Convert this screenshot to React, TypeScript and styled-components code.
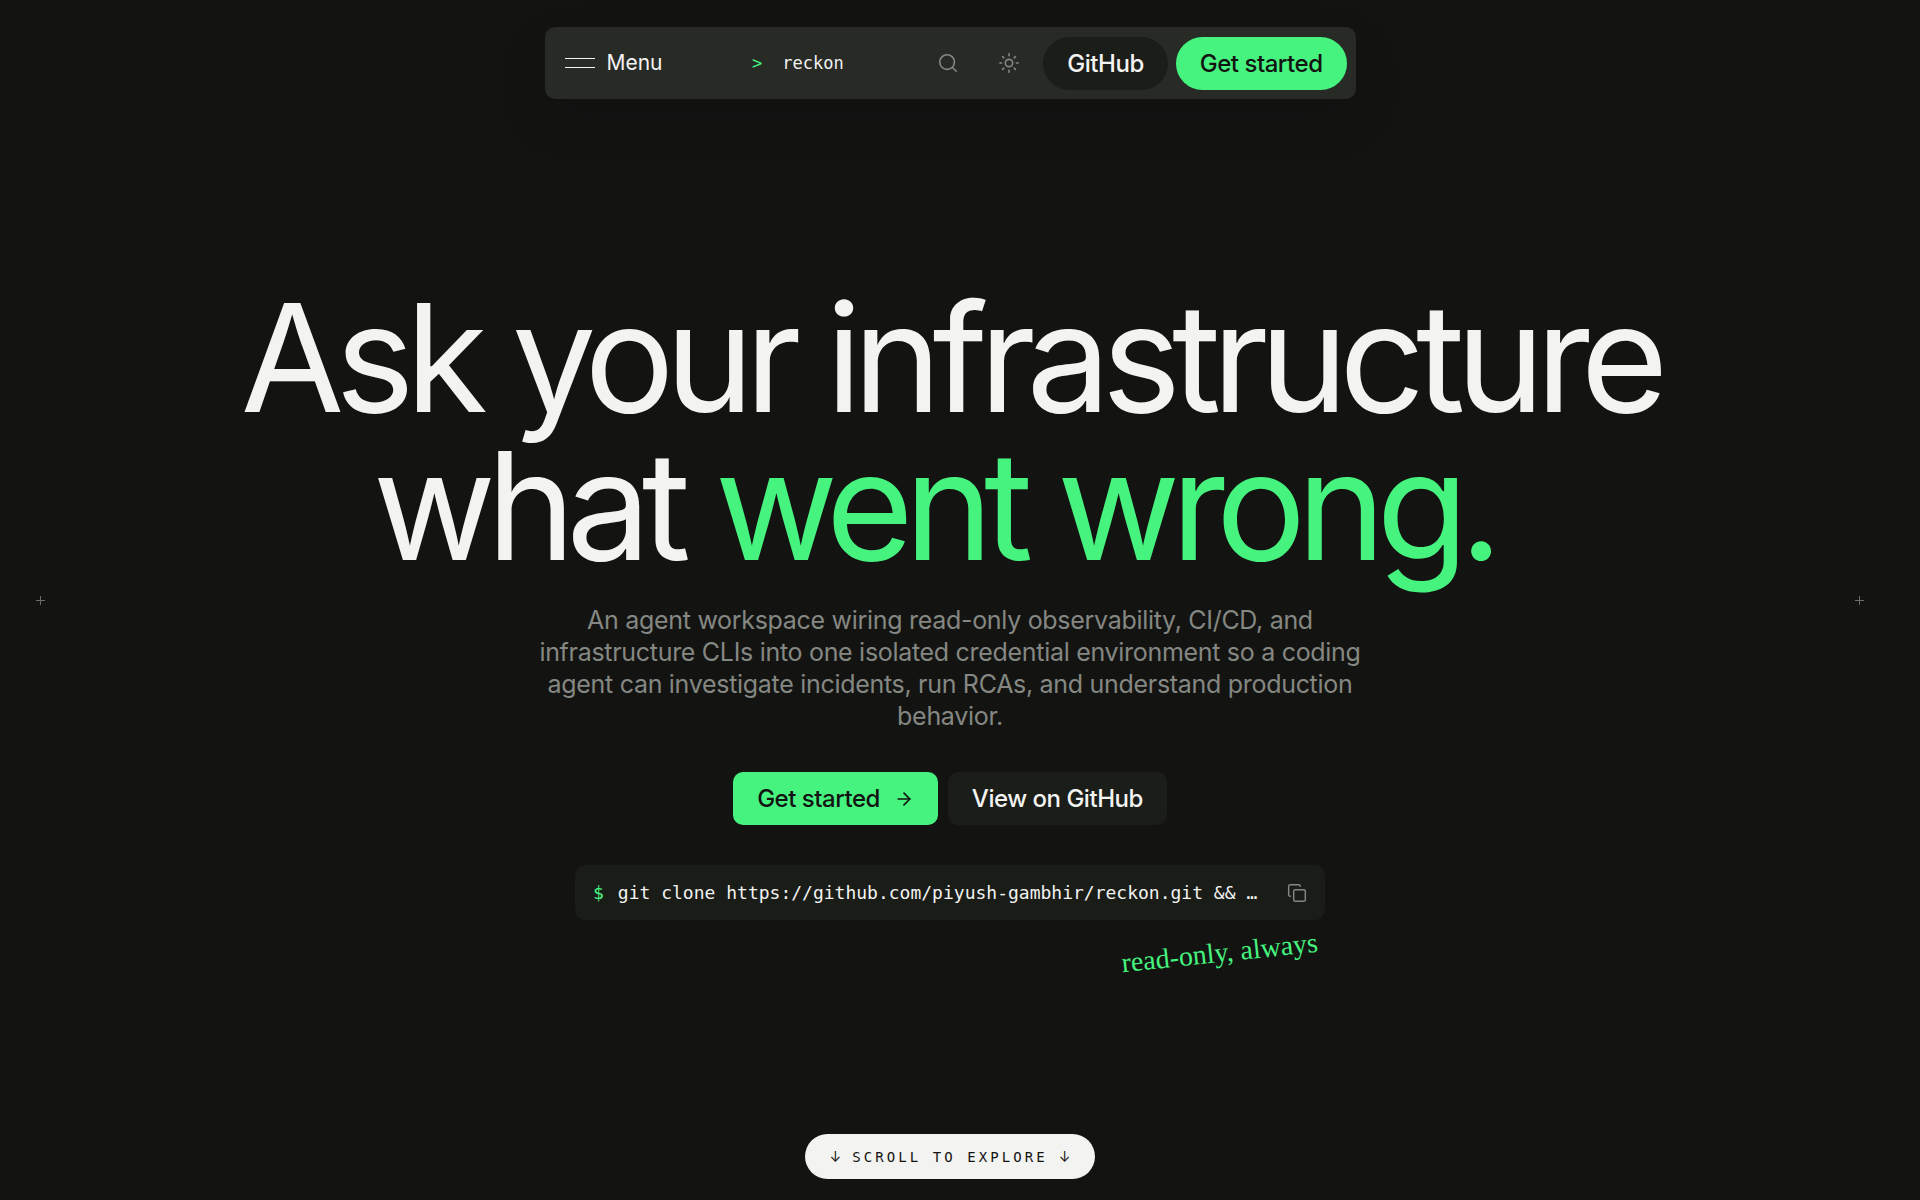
import React from "react";
import styled, { createGlobalStyle } from "styled-components";
import { ArrowRight, Copy, Search, Sun } from "lucide-react";

const GlobalStyle = createGlobalStyle`
  *, *::before, *::after { box-sizing: border-box; }
  body {
    margin: 0;
    background: #131412;
    color: #f3f3f1;
    font-family: Inter, "Liberation Sans", sans-serif;
    -webkit-font-smoothing: antialiased;
  }
  h1, p { margin: 0; }
  button { border: 0; background: none; color: inherit; font: inherit; padding: 0; cursor: pointer; }
  a { color: inherit; text-decoration: none; }
`;

const mono = `"DejaVu Sans Mono", "Liberation Mono", monospace`;
const green = "#46f37f";

const Page = styled.div`
  position: relative;
  min-height: 100vh;
  margin-right: 20px;
  padding: 27px 24px 21px;
  display: flex;
  flex-direction: column;
  align-items: center;
`;

const Nav = styled.nav`
  width: 100%;
  max-width: 811px;
  min-height: 72px;
  padding: 9px;
  padding-left: 20px;
  display: flex;
  justify-content: space-between;
  align-items: center;
  border-radius: 10px;
  background: #272a25;
  box-shadow: 0 20px 50px rgba(0, 0, 0, 0.1);
`;

const MenuButton = styled.button`
  display: flex;
  align-items: center;
  gap: 12px;
  font-size: 21px;
  line-height: 32px;
`;

const Bars = styled.span`
  width: 30px;
  height: 10px;
  border: solid #f3f3f1;
  border-width: 1px 0;
`;

const Brand = styled.a`
  display: flex;
  gap: 20px;
  padding-left: 12px;
  font: 17px/32px ${mono};
`;

const Accent = styled.span`
  color: ${green};
`;

const Actions = styled.div`
  display: flex;
  align-items: center;
  gap: 8px;
`;

const IconButton = styled.button`
  display: grid;
  place-items: center;
  width: 53px;
  height: 53px;
  color: #858782;
`;

const Button = styled.a<{ $primary?: boolean; $pill?: boolean }>`
  display: inline-flex;
  align-items: center;
  gap: 14px;
  height: 53px;
  padding: 0 24px;
  border-radius: ${(p) => (p.$pill ? "27px" : "10px")};
  background: ${(p) => (p.$primary ? green : "#1b1d19")};
  color: ${(p) => (p.$primary ? "#131412" : "#f3f3f1")};
  font-size: 24px;
  font-weight: 500;
  letter-spacing: -0.02em;
  white-space: nowrap;
`;

const Hero = styled.main`
  width: 100%;
  padding-top: 185px;
  display: flex;
  flex-direction: column;
  align-items: center;
`;

const Title = styled.h1`
  max-width: 1480px;
  font-size: 150px;
  line-height: 148px;
  font-weight: 400;
  letter-spacing: -0.06em;
  text-align: center;
`;

const Lead = styled.p`
  max-width: 830px;
  margin-top: 24px;
  color: #858782;
  font-size: 25px;
  line-height: 32px;
  letter-spacing: -0.012em;
  text-align: center;
`;

const ButtonRow = styled.div`
  display: flex;
  gap: 10px;
  margin-top: 40px;
`;

const CommandGroup = styled.div`
  width: 100%;
  max-width: 750px;
  margin-top: 40px;
  display: flex;
  flex-direction: column;
`;

const Command = styled.div`
  display: flex;
  align-items: center;
  gap: 14px;
  height: 55px;
  padding: 0 18px;
  border-radius: 10px;
  background: #1a1c18;
  font: 18px/32px ${mono};
`;

const CommandText = styled.code`
  flex: 1;
  min-width: 0;
  overflow: hidden;
  white-space: nowrap;
  text-overflow: ellipsis;
  font: inherit;
`;

const CopyButton = styled.button`
  display: grid;
  color: #858782;
`;

const Note = styled.p`
  align-self: flex-end;
  margin: 15px 7px 0 0;
  color: ${green};
  font: 28px/36px "Liberation Serif", serif;
  transform: rotate(-6deg);
`;

const ScrollLink = styled.a`
  margin-top: auto;
  display: flex;
  align-items: center;
  gap: 11px;
  height: 45px;
  padding: 0 24px;
  border-radius: 23px;
  background: #f3f3f1;
  color: #131412;
  font: 14px/20px ${mono};
  letter-spacing: 0.22em;
`;

const Arrow = styled.span`
  font-family: Inter, sans-serif;
  letter-spacing: 0;
`;

const Cross = styled.svg<{ $side: "left" | "right" }>`
  position: absolute;
  top: 50%;
  ${(p) => p.$side}: 36px;
  width: 9px;
  height: 9px;
  margin-top: -4px;
  stroke: #6b6d68;
`;

const CrossMark = ({ side }: { side: "left" | "right" }) => (
  <Cross $side={side} viewBox="0 0 9 9" aria-hidden="true">
    <path d="M4.5 0v9M0 4.5h9" />
  </Cross>
);

export default function App() {
  return (
    <>
      <GlobalStyle />
      <Page>
        <Nav>
          <MenuButton>
            <Bars />
            Menu
          </MenuButton>
          <Brand href="#">
            <Accent>&gt;</Accent>
            <span>reckon</span>
          </Brand>
          <Actions>
            <IconButton aria-label="Search">
              <Search size={22} strokeWidth={1.75} />
            </IconButton>
            <IconButton aria-label="Toggle theme">
              <Sun size={22} strokeWidth={1.75} />
            </IconButton>
            <Button href="#" $pill>GitHub</Button>
            <Button href="#" $pill $primary>Get started</Button>
          </Actions>
        </Nav>

        <Hero>
          <Title>
            Ask your infrastructure what <Accent>went wrong.</Accent>&nbsp;
          </Title>
          <Lead>
            An agent workspace wiring read-only observability, CI/CD, and infrastructure CLIs into one
            isolated credential environment so a coding agent can investigate incidents, run RCAs, and
            understand production behavior.
          </Lead>
          <ButtonRow>
            <Button href="#" $primary>
              Get started
              <ArrowRight size={20} strokeWidth={2} />
            </Button>
            <Button href="#">View on GitHub</Button>
          </ButtonRow>
          <CommandGroup>
            <Command>
              <Accent>$</Accent>
              <CommandText>git clone https://github.com/piyush-gambhir/reckon.git &amp;&amp; …</CommandText>
              <CopyButton aria-label="Copy command">
                <Copy size={20} strokeWidth={1.75} />
              </CopyButton>
            </Command>
            <Note>read-only, always</Note>
          </CommandGroup>
        </Hero>

        <ScrollLink href="#">
          <Arrow>↓</Arrow>
          <span>SCROLL TO EXPLORE</span>
          <Arrow>↓</Arrow>
        </ScrollLink>

        <CrossMark side="left" />
        <CrossMark side="right" />
      </Page>
    </>
  );
}
